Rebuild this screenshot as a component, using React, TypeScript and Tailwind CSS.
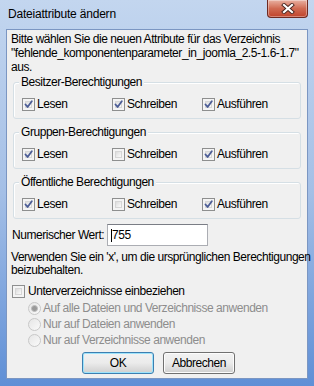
import React from 'react'

const font = { fontFamily: '"Liberation Sans", Arial, sans-serif' }

function CheckBox({ checked }: { checked: boolean }) {
  return (
    <span className="relative inline-block w-[13px] h-[13px] border border-[#8e8f8f] bg-[#f4f4f4] shrink-0">
      <span className="absolute inset-[2px] border border-[#d6d6d6] bg-gradient-to-br from-[#dcdcdc] to-[#fbfbfb]" />
      {checked && (
        <svg className="absolute left-[1px] top-[1px]" width="9" height="9" viewBox="0 0 9 9">
          <path d="M1.5 4.5 L3.6 7 L7.8 1.2" fill="none" stroke="#4b5c96" strokeWidth="1.8" strokeLinecap="round" strokeLinejoin="round" />
        </svg>
      )}
    </span>
  )
}

function Radio({ selected }: { selected: boolean }) {
  return (
    <span className="relative inline-block w-[13px] h-[13px] rounded-full border border-[#c8c8c8] bg-gradient-to-br from-[#e6e6e6] to-[#fafafa] shrink-0">
      {selected && <span className="absolute left-[2px] top-[2px] w-[7px] h-[7px] rounded-full bg-[#9a9a9a] border border-[#bdbdbd]" />}
    </span>
  )
}

function Group({ title, items }: { title: string; items: [string, boolean][] }) {
  return (
    <div className="relative mx-[6px] h-[37px] border border-[#d5dfe5] rounded-[3px] shadow-[inset_1px_1px_0_#ffffff]">
      <span className="absolute left-[5px] -top-[8px] px-[2px] bg-[#f0f0f0] leading-[15px]">{title}</span>
      <div className="flex pl-[8px] pt-[15px]">
        {items.map(([label, checked]) => (
          <div key={label} className="w-[90px] flex items-center gap-[2px] leading-[13px]">
            <CheckBox checked={checked} />
            <span>{label}</span>
          </div>
        ))}
      </div>
    </div>
  )
}

export default function App() {
  return (
    <div
      className="w-[314px] h-[386px] flex flex-col bg-gradient-to-b from-[#c3d6ef] via-[#a4bfe6] to-[#5f8fd6] text-[12px] text-black select-none whitespace-nowrap"
      style={font}
    >
      {/* Title bar */}
      <div className="relative h-[29px] shrink-0">
        <span className="absolute left-[8px] top-[7px] leading-[15px] tracking-[-0.2px]">Dateiattribute ändern</span>
        <div className="absolute left-[267px] top-0 w-[41px] h-[18px] rounded-b-[4px] border border-t-0 border-[#6e2a22] bg-gradient-to-b from-[#e8b1a2] via-[#d06a52] to-[#c0432b] flex items-center justify-center shadow-[inset_0_0_0_1px_rgba(255,255,255,0.35)]">
          <svg width="14" height="11" viewBox="0 0 14 11">
            <path d="M3 2 L11 9 M11 2 L3 9" stroke="#4a2620" strokeWidth="4" strokeLinecap="square" />
            <path d="M3 2 L11 9 M11 2 L3 9" stroke="#ffffff" strokeWidth="2.2" strokeLinecap="square" />
          </svg>
        </div>
      </div>

      {/* Client area */}
      <div className="ml-[6px] w-[302px] h-[350px] border border-[#7b96c2] bg-[#f0f0f0] flex flex-col tracking-[-0.45px]">
        <p className="pl-[4px] pt-[2px] leading-[14px]">
          Bitte wählen Sie die neuen Attribute für das Verzeichnis
          <br />"fehlende_komponentenparameter_in_joomla_2.5-1.6-1.7"
          <br />aus.
        </p>

        <div className="mt-[8px] flex flex-col gap-[13px]">
          <Group title="Besitzer-Berechtigungen" items={[['Lesen', true], ['Schreiben', true], ['Ausführen', true]]} />
          <Group title="Gruppen-Berechtigungen" items={[['Lesen', true], ['Schreiben', false], ['Ausführen', true]]} />
          <Group title="Öffentliche Berechtigungen" items={[['Lesen', true], ['Schreiben', false], ['Ausführen', true]]} />
        </div>

        <div className="mt-[5px] flex items-center pl-[5px]">
          <span className="w-[95px]">Numerischer Wert:</span>
          <div className="w-[101px] h-[22px] bg-white border border-[#abadb3] border-t-[#7a7d85] flex items-center pl-[3px]">
            <span className="w-px h-[13px] bg-black" />
            <span className="leading-[14px]">755</span>
          </div>
        </div>

        <p className="mt-[5px] pl-[4px] leading-[13px]">
          Verwenden Sie ein 'x', um die ursprünglichen Berechtigungen
          <br />beizubehalten.
        </p>

        <label className="mt-[8px] pl-[5px] flex items-center gap-[3px] leading-[13px]">
          <CheckBox checked={false} />
          <span>Unterverzeichnisse einbeziehen</span>
        </label>

        <div className="mt-[4px] pl-[21px] flex flex-col gap-[3px] text-[#8d8d8d]">
          {[
            ['Auf alle Dateien und Verzeichnisse anwenden', true],
            ['Nur auf Dateien anwenden', false],
            ['Nur auf Verzeichnisse anwenden', false],
          ].map(([label, sel]) => (
            <div key={label as string} className="flex items-center gap-[2px] leading-[13px]">
              <Radio selected={sel as boolean} />
              <span>{label as string}</span>
            </div>
          ))}
        </div>

        <div className="mt-[5px] flex pl-[75px] gap-[9px]">
          <button className="w-[72px] h-[22px] rounded-[3px] border border-[#3c7fb1] bg-gradient-to-b from-[#f2f2f2] via-[#ebebeb] to-[#cfcfcf] shadow-[inset_0_0_0_1px_#9ee3fb] leading-[13px]">
            OK
          </button>
          <button className="w-[72px] h-[22px] rounded-[3px] border border-[#707070] bg-gradient-to-b from-[#f2f2f2] via-[#ebebeb] to-[#cfcfcf] shadow-[inset_0_0_0_1px_#fcfcfc] leading-[13px]">
            Abbrechen
          </button>
        </div>
      </div>
    </div>
  )
}
